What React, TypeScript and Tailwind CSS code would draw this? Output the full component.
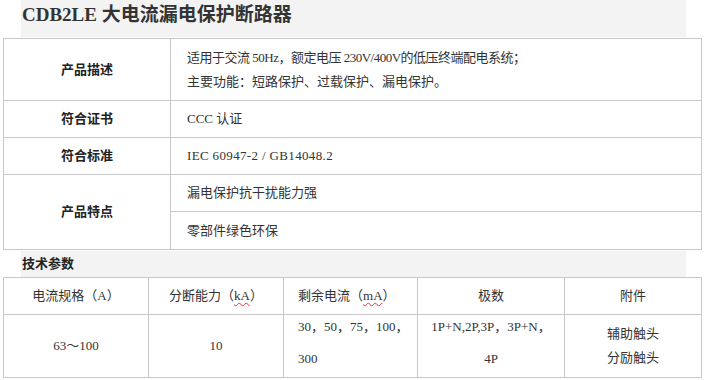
import React from 'react';

const cell = 'border border-[#c8c8c8]';

const Label: React.FC<{ text: string; rowSpan?: number }> = ({ text, rowSpan }) => (
  <td rowSpan={rowSpan} className={`${cell} text-center text-[13px] font-bold text-[#222]`}>
    {text}
  </td>
);

const Value: React.FC<{ children: React.ReactNode }> = ({ children }) => (
  <td className={`${cell} pl-4 leading-[24px]`}>{children}</td>
);

const Unit: React.FC<{ text: string }> = ({ text }) => (
  <span className="underline decoration-wavy decoration-red-500 decoration-1 underline-offset-2">{text}</span>
);

const App: React.FC = () => (
  <div className="w-[707px] h-[380px] overflow-hidden bg-white text-[#333] font-[family-name:'Liberation_Serif','Noto_Sans_CJK_SC',serif]">
    {/* title */}
    <div className="ml-[21px] mb-px h-[37px] w-[665px] bg-[#f3f3f3] pl-px text-[19px] font-bold leading-[30px] text-[#333]">
      CDB2LE 大电流漏电保护断路器
    </div>

    {/* product info */}
    <table className="ml-[3px] w-[699px] table-fixed border-collapse text-[13px]">
      <colgroup>
        <col className="w-[167px]" />
        <col />
      </colgroup>
      <tbody>
        <tr className="h-[62px]">
          <Label text="产品描述" />
          <Value>
            <div className="tracking-[-0.5px]">适用于交流 50Hz，额定电压 230V/400V的低压终端配电系统；</div>
            <div>主要功能：短路保护、过载保护、漏电保护。</div>
          </Value>
        </tr>
        <tr className="h-[37px]">
          <Label text="符合证书" />
          <Value>CCC 认证</Value>
        </tr>
        <tr className="h-[37px]">
          <Label text="符合标准" />
          <Value>
            <span className="tracking-[0.35px]">IEC 60947-2 / GB14048.2</span>
          </Value>
        </tr>
        <tr className="h-[37px]">
          <Label text="产品特点" rowSpan={2} />
          <Value>漏电保护抗干扰能力强</Value>
        </tr>
        <tr className="h-[38px]">
          <Value>零部件绿色环保</Value>
        </tr>
      </tbody>
    </table>

    {/* tech params */}
    <div className="ml-[21px] mt-px h-[26px] w-[665px] bg-[#f3f3f3] pl-px text-[13px] font-bold leading-[26px] text-[#222]">
      技术参数
    </div>

    <table className="ml-[3px] w-[699px] table-fixed border-collapse text-[13px]">
      <colgroup>
        <col className="w-[145px]" />
        <col className="w-[135px]" />
        <col className="w-[134px]" />
        <col className="w-[147px]" />
        <col />
      </colgroup>
      <tbody>
        <tr className="h-[37px]">
          <td className={`${cell} text-center`}>电流规格（A）</td>
          <td className={`${cell} text-center`}>
            分断能力（<Unit text="kA" />）
          </td>
          <td className={`${cell} pl-[14px]`}>
            剩余电流（<Unit text="mA" />）
          </td>
          <td className={`${cell} text-center`}>极数</td>
          <td className={`${cell} text-center`}>附件</td>
        </tr>
        <tr className="h-[63px]">
          <td className={`${cell} text-center`}>63～100</td>
          <td className={`${cell} text-center`}>10</td>
          <td className={`${cell} pl-[14px] leading-[32px]`}>
            <div className="-mt-[6px]">
              <div>30，50，75，100，</div>
              <div>300</div>
            </div>
          </td>
          <td className={`${cell} text-center leading-[32px]`}>
            <div className="-mt-[6px]">
              <div>1P+N,2P,3P，3P+N，</div>
              <div>4P</div>
            </div>
          </td>
          <td className={`${cell} text-center leading-[24px]`}>
            <div>辅助触头</div>
            <div>分励触头</div>
          </td>
        </tr>
      </tbody>
    </table>
  </div>
);

export default App;
